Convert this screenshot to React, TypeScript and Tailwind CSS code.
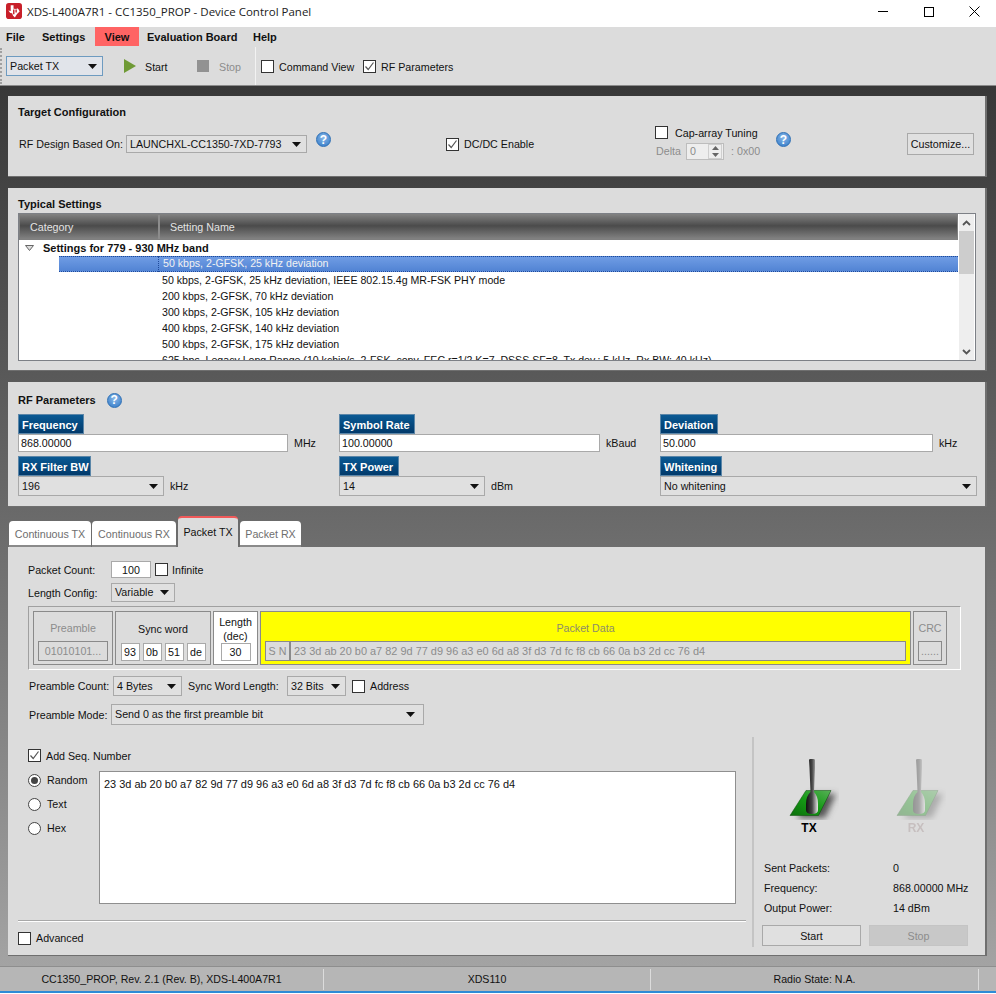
import type { ReactNode } from "react"

function Caret() {
  return (
    <svg width="9" height="5" viewBox="0 0 9 5" className="shrink-0">
      <path d="M0 0h9L4.5 5z" fill="#111" />
    </svg>
  )
}

function Select({ value, className = "" }: { value: string; className?: string }) {
  return (
    <div className={`flex shrink-0 items-center justify-between border border-[#a9a9a9] bg-[#e0e0e0] pl-[3px] pr-[5px] text-[#111] ${className}`}>
      <span className="whitespace-nowrap">{value}</span>
      <Caret />
    </div>
  )
}

function Check({ checked = false }: { checked?: boolean }) {
  return (
    <div className="flex h-[13px] w-[13px] shrink-0 items-center justify-center border border-[#333] bg-white">
      {checked && (
        <svg width="11" height="11" viewBox="0 0 11 11">
          <path d="M1.5 5.5 4.2 8.5 9.5 1.5" fill="none" stroke="#555" strokeWidth="1.2" />
        </svg>
      )}
    </div>
  )
}

function Radio({ label, checked = false }: { label: string; checked?: boolean }) {
  return (
    <div className="flex h-[24px] items-center">
      <div className="flex h-[13px] w-[13px] items-center justify-center rounded-full border border-[#444] bg-white">
        {checked && <div className="h-[7px] w-[7px] rounded-full bg-[#444]" />}
      </div>
      <span className="ml-[6px]">{label}</span>
    </div>
  )
}

function Help() {
  return (
    <div className="flex h-[15px] w-[15px] shrink-0 items-center justify-center rounded-full border border-[#2d6fb5] bg-[radial-gradient(circle_at_50%_35%,#8ab8e8,#2f78c6)] font-bold text-[12px] leading-none text-white">
      ?
    </div>
  )
}

function Panel({ children, className = "" }: { children: ReactNode; className?: string }) {
  return <div className={`ml-[8px] mr-[9px] border-b border-r-2 border-[#6f6f6f] bg-[#dcdcdc] ${className}`}>{children}</div>
}

function Heading({ children }: { children: ReactNode }) {
  return <div className="text-[11px] font-bold leading-[14px] text-[#111]">{children}</div>
}

function ParamHead({ children, className = "" }: { children: ReactNode; className?: string }) {
  return (
    <div className={`flex h-[20px] items-center whitespace-nowrap border border-[#5b86a8] bg-gradient-to-b from-[#0b5a94] to-[#023a6b] pl-[3px] pt-[2px] font-bold text-[11px] text-white ${className}`}>
      {children}
    </div>
  )
}

function Tab({ label, active = false, className = "" }: { label: string; active?: boolean; className?: string }) {
  if (active) {
    return (
      <div className={`flex h-[31px] items-center justify-center rounded-t-[4px] border-t-2 border-[#f05a5a] bg-[#dcdcdc] text-[#111] ${className}`}>
        {label}
      </div>
    )
  }
  return (
    <div className={`flex h-[26px] items-center justify-center rounded-t-[4px] border-b-2 border-[#8a8a8a] bg-white pt-[2px] text-[#6e6e6e] ${className}`}>
      {label}
    </div>
  )
}

// transmitter stick picture, shared by TX and RX
function Antenna({ id, label, dim = false }: { id: string; label: string; dim?: boolean }) {
  return (
    <div className={`w-[60px] ${dim ? "opacity-35" : ""}`}>
      <svg width="60" height="70" viewBox="0 0 60 70">
        <defs>
          <linearGradient id={`${id}-g`} x1="0" y1="1" x2="1" y2="0">
            <stop offset="0" stopColor="#0b6e0b" />
            <stop offset="0.5" stopColor="#159a15" />
            <stop offset="1" stopColor="#58b058" />
          </linearGradient>
          <linearGradient id={`${id}-s`} x1="0" y1="0" x2="1" y2="0">
            <stop offset="0" stopColor="#111" />
            <stop offset="0.5" stopColor="#444" />
            <stop offset="1" stopColor="#e8e8e8" />
          </linearGradient>
          <filter id={`${id}-b`} x="-40%" y="-40%" width="180%" height="180%">
            <feGaussianBlur stdDeviation="3" />
          </filter>
        </defs>
        <path d="M32 44 57 44 46 68 18 68z" fill="#555" filter={`url(#${id}-b)`} />
        <path d="M27 40.5H52L39.5 65.5H11z" fill={`url(#${id}-g)`} stroke="#0a4a0a" strokeWidth="0.5" />
        <path
          d="M30 10Q30 9 31.5 9H34.5Q36 9 36 10V18L35 42Q39 46 39 54V60Q39 64 33 64Q27 64 27 60V54Q27 46 31.5 42L30.5 18z"
          fill={`url(#${id}-s)`}
        />
      </svg>
      <div className={`mt-[1px] text-center text-[12px] font-bold leading-[14px] ${dim ? "text-[#a08a8a]" : "text-black"}`}>{label}</div>
    </div>
  )
}

const settingRows = [
  "50 kbps, 2-GFSK, 25 kHz deviation, IEEE 802.15.4g MR-FSK PHY mode",
  "200 kbps, 2-GFSK, 70 kHz deviation",
  "300 kbps, 2-GFSK, 105 kHz deviation",
  "400 kbps, 2-GFSK, 140 kHz deviation",
  "500 kbps, 2-GFSK, 175 kHz deviation",
  "625 bps, Legacy Long Range (10 kchip/s, 2-FSK, conv. FEC r=1/2 K=7, DSSS SF=8, Tx dev.: 5 kHz, Rx BW: 40 kHz)",
]

const hexData = "23 3d ab 20 b0 a7 82 9d 77 d9 96 a3 e0 6d a8 3f d3 7d fc f8 cb 66 0a b3 2d cc 76 d4"

export default function App() {
  return (
    <div className="flex h-[994px] w-[996px] flex-col overflow-hidden bg-white font-['Liberation_Sans',Arial,sans-serif] text-[10.7px] text-[#111]">
      {/* Title bar */}
      <div className="flex h-[27px] shrink-0 items-start bg-white pl-[6px] pt-[3px]">
        <svg width="16" height="16" viewBox="0 0 17 17">
          <rect width="17" height="17" rx="3" fill="#c8202a" />
          <path d="M5 2.500h3v3.500l3 .5 1-1 1.500 1.500 1 2-2.500 2.500-1.500 2-1 2-2-2-1-2.500-2-.5-2-2.500 2.500.5z" fill="#fff" />
          <path d="M7.500 7h1.500v5H7.500zM10 7h1.500v3H10z" fill="#c8202a" />
        </svg>
        <span className="ml-[5px] font-['Open_Sans',sans-serif] text-[11.500px] leading-[18px] text-[#222]">XDS-L400A7R1 - CC1350_PROP - Device Control Panel</span>
        <div className="-mt-[3px] ml-auto flex h-[23px]">
          <div className="flex w-[46px] items-center justify-center">
            <div className="h-[1px] w-[10px] bg-black" />
          </div>
          <div className="flex w-[46px] items-center justify-center">
            <div className="h-[10px] w-[10px] border border-black" />
          </div>
          <div className="flex w-[44px] items-center justify-center">
            <svg width="11" height="11" viewBox="0 0 11 11">
              <path d="M.5.5l10 10M10.500.5l-10 10" stroke="#000" strokeWidth="1" fill="none" />
            </svg>
          </div>
        </div>
      </div>

      {/* Menu */}
      <div className="flex h-[19px] shrink-0 items-center bg-[#dcdcdc] text-[11px] font-bold">
        <div className="ml-[6px] w-[36px] pt-[1px]">File</div>
        <div className="w-[53px] pt-[1px]">Settings</div>
        <div className="flex h-full w-[44px] items-center justify-center bg-[#ff6464] pt-[1px]">View</div>
        <div className="ml-[8px] w-[106px] pt-[1px]">Evaluation Board</div>
        <div className="pt-[1px]">Help</div>
      </div>

      {/* Toolbar */}
      <div className="flex h-[40px] shrink-0 items-center border-b border-[#8a8a8a] bg-[#dcdcdc] pt-[1px]">
        <div className="h-[36px] w-[2px] border-l-2 border-dotted border-[#a0a0a0]" />
        <div className="ml-[4px] flex h-[20px] w-[97px] items-center justify-between border border-[#6e9bc0] bg-[#e1e4ea] pl-[3px] pr-[5px]">
          <span>Packet TX</span>
          <Caret />
        </div>
        <svg width="12" height="14" viewBox="0 0 12 14" className="ml-[21px]">
          <path d="M0 0 12 7 0 14z" fill="#6f9a35" />
        </svg>
        <span className="ml-[9px] w-[52px] pt-[2px]">Start</span>
        <div className="h-[12px] w-[12px] bg-[#929292]" />
        <span className="ml-[10px] w-[36px] pt-[2px] text-[#8c8c8c]">Stop</span>
        <div className="h-full w-[1px] bg-[#f2f2f2]" />
        <div className="ml-[5px] flex items-center pt-[1px]">
          <Check />
          <span className="ml-[5px] w-[84px] pt-[1px]">Command View</span>
          <Check checked />
          <span className="ml-[5px] pt-[1px]">RF Parameters</span>
        </div>
      </div>

      {/* Main area */}
      <div className="flex flex-1 flex-col bg-gradient-to-b from-[#383838] to-[#a3a3a3] pt-[10px]">
        {/* Target Configuration */}
        <Panel className="mb-[11px] h-[81px] pl-[10px] pt-[9px]">
          <Heading>Target Configuration</Heading>
          <div className="mt-[7px] flex h-[33px] items-start">
            <div className="ml-[1px] mt-[11px] w-[107px] shrink-0 leading-[14px]">RF Design Based On:</div>
            <Select value="LAUNCHXL-CC1350-7XD-7793" className="mt-[9px] h-[18px] w-[181px]" />
            <div className="ml-[9px] mt-[6px]">
              <Help />
            </div>
            <div className="ml-[115px] mt-[12px] flex h-[13px] items-center">
              <Check checked />
              <span className="ml-[5px] w-[191px]">DC/DC Enable</span>
            </div>
            <div className="w-[121px]">
              <div className="flex h-[13px] items-center">
                <Check />
                <span className="ml-[7px] pt-[1px]">Cap-array Tuning</span>
              </div>
              <div className="mt-[4px] flex h-[17px] items-center text-[#8c8c8c]">
                <span className="ml-[1px] w-[30px]">Delta</span>
                <div className="flex h-[17px] w-[38px] items-center justify-between border border-[#bdbdbd] bg-[#eeeeee] pl-[3px] pr-[1px]">
                  <span>0</span>
                  <div className="flex h-[15px] w-[14px] flex-col items-center justify-center gap-[3px] border border-[#cfcfcf]">
                    <svg width="7" height="4" viewBox="0 0 7 4"><path d="M0 4 3.500 0 7 4z" fill="#666" /></svg>
                    <svg width="7" height="4" viewBox="0 0 7 4"><path d="M0 0 3.500 4 7 0z" fill="#666" /></svg>
                  </div>
                </div>
                <span className="ml-[7px] whitespace-nowrap">: 0x00</span>
              </div>
            </div>
            <div className="mt-[6px]">
              <Help />
            </div>
            <div className="ml-[116px] mt-[7px] flex h-[22px] w-[67px] items-center justify-center border border-[#a9a9a9] bg-[#e0e0e0]">Customize...</div>
          </div>
        </Panel>

        {/* Typical Settings */}
        <Panel className="mb-[11px] h-[183px] pl-[10px] pt-[9px]">
          <Heading>Typical Settings</Heading>
          <div className="mt-[2px] flex h-[148px] w-[958px] border border-[#7d8086] bg-white pr-[1px]">
            <div className="flex w-[939px] shrink-0 flex-col">
              <div className="flex h-[26px] shrink-0 items-center border border-[#808080] bg-[linear-gradient(to_bottom,#7e7e7e,#4b4b4b_45%,#828282)] text-[#e4e4e4]">
                <div className="h-full w-[140px] border-r-2 border-[#8c8c8c] pl-[10px] leading-[24px]">Category</div>
                <div className="pl-[10px]">Setting Name</div>
              </div>
              <div className="h-[120px] overflow-hidden text-[10.6px]">
                <div className="flex h-[16px] items-center text-[11px] font-bold">
                  <svg width="9" height="6" viewBox="0 0 9 6" className="ml-[6px]">
                    <path d="M.5.5h8L4.500 5.500z" fill="#ddd" stroke="#666" />
                  </svg>
                  <span className="ml-[9px]">Settings for 779 - 930 MHz band</span>
                </div>
                <div className="ml-[40px] flex h-[16px] items-center border-y border-dotted border-[#1f4a9a] bg-gradient-to-b from-[#6f9ce4] to-[#5284d4] text-[#f2f2f2]">
                  <span className="ml-[99px] whitespace-nowrap border-l border-dotted border-[#1f4a9a] pl-[4px]">50 kbps, 2-GFSK, 25 kHz deviation</span>
                </div>
                {settingRows.map((row) => (
                  <div key={row} className="flex h-[16px] items-center whitespace-nowrap pl-[143px] pt-[2px]">
                    {row}
                  </div>
                ))}
              </div>
            </div>
            <div className="ml-[1px] flex w-[15px] shrink-0 flex-col bg-[#eeeeee]">
              <div className="flex h-[17px] items-center justify-center">
                <svg width="9" height="6" viewBox="0 0 9 6"><path d="M1 5 4.500 1.500 8 5" fill="none" stroke="#555" strokeWidth="1.800" /></svg>
              </div>
              <div className="h-[43px] bg-[#cdcdcd]" />
              <div className="mt-auto flex h-[17px] items-center justify-center">
                <svg width="9" height="6" viewBox="0 0 9 6"><path d="M1 1 4.500 4.500 8 1" fill="none" stroke="#555" strokeWidth="1.800" /></svg>
              </div>
            </div>
          </div>
        </Panel>

        {/* RF Parameters */}
        <Panel className="h-[125px] pl-[10px] pt-[11px]">
          <div className="flex h-[14px] items-center">
            <Heading>RF Parameters</Heading>
            <div className="ml-[11px]">
              <Help />
            </div>
          </div>
          <div className="mt-[7px] grid grid-cols-[321px_321px_1fr]">
            <div>
              <ParamHead className="w-[66px]">Frequency</ParamHead>
              <div className="flex items-center">
                <div className="flex h-[18px] w-[270px] items-center border border-[#a9a9a9] bg-white pl-[2px]">868.00000</div>
                <span className="ml-[6px]">MHz</span>
              </div>
              <div className="mt-[4px]">
                <ParamHead className="w-[73px]">RX Filter BW</ParamHead>
              </div>
              <div className="flex items-center">
                <Select value="196" className="h-[20px] w-[146px]" />
                <span className="ml-[6px]">kHz</span>
              </div>
            </div>
            <div>
              <ParamHead className="w-[76px]">Symbol Rate</ParamHead>
              <div className="flex items-center">
                <div className="flex h-[18px] w-[261px] items-center border border-[#a9a9a9] bg-white pl-[2px]">100.00000</div>
                <span className="ml-[6px]">kBaud</span>
              </div>
              <div className="mt-[4px]">
                <ParamHead className="w-[60px]">TX Power</ParamHead>
              </div>
              <div className="flex items-center">
                <Select value="14" className="h-[20px] w-[146px]" />
                <span className="ml-[6px]">dBm</span>
              </div>
            </div>
            <div>
              <ParamHead className="w-[58px]">Deviation</ParamHead>
              <div className="flex items-center">
                <div className="flex h-[18px] w-[273px] items-center border border-[#a9a9a9] bg-white pl-[2px]">50.000</div>
                <span className="ml-[6px]">kHz</span>
              </div>
              <div className="mt-[4px]">
                <ParamHead className="w-[62px]">Whitening</ParamHead>
              </div>
              <Select value="No whitening" className="h-[20px] w-[317px]" />
            </div>
          </div>
        </Panel>

        {/* Tabs */}
        <div className="ml-[9px] mt-[9px] flex h-[31px] items-end">
          <Tab label="Continuous TX" className="w-[82px]" />
          <Tab label="Continuous RX" className="ml-[1px] w-[84px]" />
          <Tab label="Packet TX" active className="ml-[2px] w-[60px]" />
          <Tab label="Packet RX" className="ml-[2px] w-[61px]" />
        </div>

        <Panel className="flex h-[409px] flex-col">
          {/* Packet settings */}
          <div className="ml-[20px] mt-[14px] flex h-[17px] items-center">
            <span className="w-[83px] pt-[2px]">Packet Count:</span>
            <div className="flex h-[17px] w-[40px] items-center justify-center border border-[#a9a9a9] bg-white pt-[1px]">100</div>
            <div className="ml-[4px]">
              <Check />
            </div>
            <span className="ml-[4px] pt-[2px]">Infinite</span>
          </div>
          <div className="ml-[20px] mt-[5px] flex h-[19px] items-center">
            <span className="w-[83px] pt-[2px]">Length Config:</span>
            <Select value="Variable" className="h-[19px] w-[64px]" />
          </div>

          {/* Packet format */}
          <div className="ml-[20px] mt-[4px] flex h-[64px] w-[933px] gap-[2px] border border-b-white border-l-[#a0a0a0] border-r-white border-t-[#a0a0a0] pl-[4px] pt-[4px]">
            <div className="flex h-[54px] w-[80px] flex-col items-center border border-[#8a8a8a] text-[#8c8c8c]">
              <div className="mt-[9px] h-[14px] leading-[14px]">Preamble</div>
              <div className="mt-[6px] flex h-[20px] w-[70px] items-center justify-center border border-[#8a8a8a]">01010101...</div>
            </div>
            <div className="flex h-[54px] w-[96px] flex-col items-center border border-[#8a8a8a]">
              <div className="mt-[10px] h-[14px] leading-[14px]">Sync word</div>
              <div className="mt-[7px] flex gap-[3px]">
                {["93", "0b", "51", "de"].map((b) => (
                  <div key={b} className="flex h-[18px] w-[19px] items-center justify-center border border-[#a9a9a9] bg-white">
                    {b}
                  </div>
                ))}
              </div>
            </div>
            <div className="flex h-[54px] w-[45px] flex-col items-center border border-[#8a8a8a] bg-white">
              <div className="mt-[3px] text-center leading-[14px]">
                Length
                <br />
                (dec)
              </div>
              <div className="flex h-[18px] w-[30px] items-center justify-center border border-[#a9a9a9]">30</div>
            </div>
            <div className="flex h-[54px] w-[651px] flex-col items-center border border-[#8a8a8a] bg-[#ffff00] text-[#8c8c6a]">
              <div className="mt-[9px] h-[14px] leading-[14px]">Packet Data</div>
              <div className="mt-[6px] flex h-[20px] w-[641px] items-center border border-[#8a8a8a] bg-[#dcdcdc] text-[#8c8c8c]">
                <div className="flex h-full w-[25px] items-center justify-center border-r-2 border-[#8a8a8a]">S N</div>
                <span className="ml-[3px] text-[10.950px]">{hexData}</span>
              </div>
            </div>
            <div className="flex h-[54px] w-[34px] flex-col items-center border border-[#8a8a8a] text-[#8c8c8c]">
              <div className="mt-[9px] h-[14px] leading-[14px]">CRC</div>
              <div className="mt-[6px] flex h-[20px] w-[24px] items-center justify-center border border-[#8a8a8a]">......</div>
            </div>
          </div>

          <div className="ml-[21px] mt-[6px] flex h-[20px] items-center">
            <span className="w-[84px] pt-[1px]">Preamble Count:</span>
            <Select value="4 Bytes" className="h-[20px] w-[69px]" />
            <span className="ml-[6px] w-[99px] pt-[1px]">Sync Word Length:</span>
            <Select value="32 Bits" className="h-[20px] w-[59px]" />
            <div className="ml-[6px]">
              <Check />
            </div>
            <span className="ml-[5px]">Address</span>
          </div>
          <div className="ml-[21px] mt-[8px] flex h-[21px] items-center">
            <span className="w-[82px] pt-[2px]">Preamble Mode:</span>
            <Select value="Send 0 as the first preamble bit" className="h-[21px] w-[313px] pr-[8px]" />
          </div>

          {/* Lower part */}
          <div className="mt-[12px] flex flex-1 pb-[8px]">
            <div className="ml-[10px] flex w-[728px] flex-col">
              <div className="ml-[10px] mt-[12px] flex h-[13px] items-center">
                <Check checked />
                <span className="ml-[5px] pt-[1px]">Add Seq. Number</span>
              </div>
              <div className="ml-[10px] mt-[9px] flex">
                <div className="-mt-[3px] w-[71px]">
                  <Radio label="Random" checked />
                  <Radio label="Text" />
                  <Radio label="Hex" />
                </div>
                <div className="h-[133px] w-[637px] border border-[#8f8f8f] bg-white pl-[4px] pt-[5px] text-[10.950px] leading-[14px]">{hexData}</div>
              </div>
              <div className="mt-[16px] h-[2px] border-t border-[#a8a8a8] bg-white" />
              <div className="mt-[10px] flex h-[13px] items-center">
                <Check />
                <span className="ml-[5px]">Advanced</span>
              </div>
            </div>
            <div className="ml-[6px] flex w-[222px] flex-col border-l-2 border-[#c4c4c4]">
              <div className="ml-[25px] mt-[13px] flex gap-[47px]">
                <Antenna id="tx" label="TX" />
                <Antenna id="rx" label="RX" dim />
              </div>
              <div className="ml-[10px] mt-[26px] flex flex-col gap-[6px]">
                <div className="flex h-[14px] items-center">
                  <span className="w-[129px]">Sent Packets:</span>
                  <span>0</span>
                </div>
                <div className="flex h-[14px] items-center">
                  <span className="w-[129px]">Frequency:</span>
                  <span>868.00000 MHz</span>
                </div>
                <div className="flex h-[14px] items-center">
                  <span className="w-[129px]">Output Power:</span>
                  <span>14 dBm</span>
                </div>
              </div>
              <div className="ml-[8px] mt-[10px] flex gap-[8px]">
                <div className="flex h-[21px] w-[99px] items-center justify-center border border-[#a9a9a9] bg-[#e0e0e0] pt-[1px]">Start</div>
                <div className="flex h-[21px] w-[99px] items-center justify-center border border-[#c4c4c4] bg-[#c8c8c8] pt-[1px] text-[#8c8c8c]">Stop</div>
              </div>
            </div>
          </div>
        </Panel>
        <div className="flex-1" />
      </div>

      {/* Status bar */}
      <div className="flex h-[25px] shrink-0 items-center border-t border-[#8e8e8e] bg-[#b6b6b6] text-[10.600px]">
        <div className="flex h-[21px] w-[324px] items-center justify-center border-r border-[#dcdcdc] pt-[1px]">CC1350_PROP, Rev. 2.1 (Rev. B), XDS-L400A7R1</div>
        <div className="flex h-[21px] w-[327px] items-center justify-center border-r border-[#dcdcdc] pt-[1px]">XDS110</div>
        <div className="flex h-[21px] w-[328px] items-center justify-center border-r border-[#dcdcdc] pt-[1px]">Radio State: N.A.</div>
      </div>
      <div className="h-[2px] shrink-0 bg-[#2e8bd6]" />
      <div className="h-[1px] shrink-0 bg-white" />
    </div>
  )
}
